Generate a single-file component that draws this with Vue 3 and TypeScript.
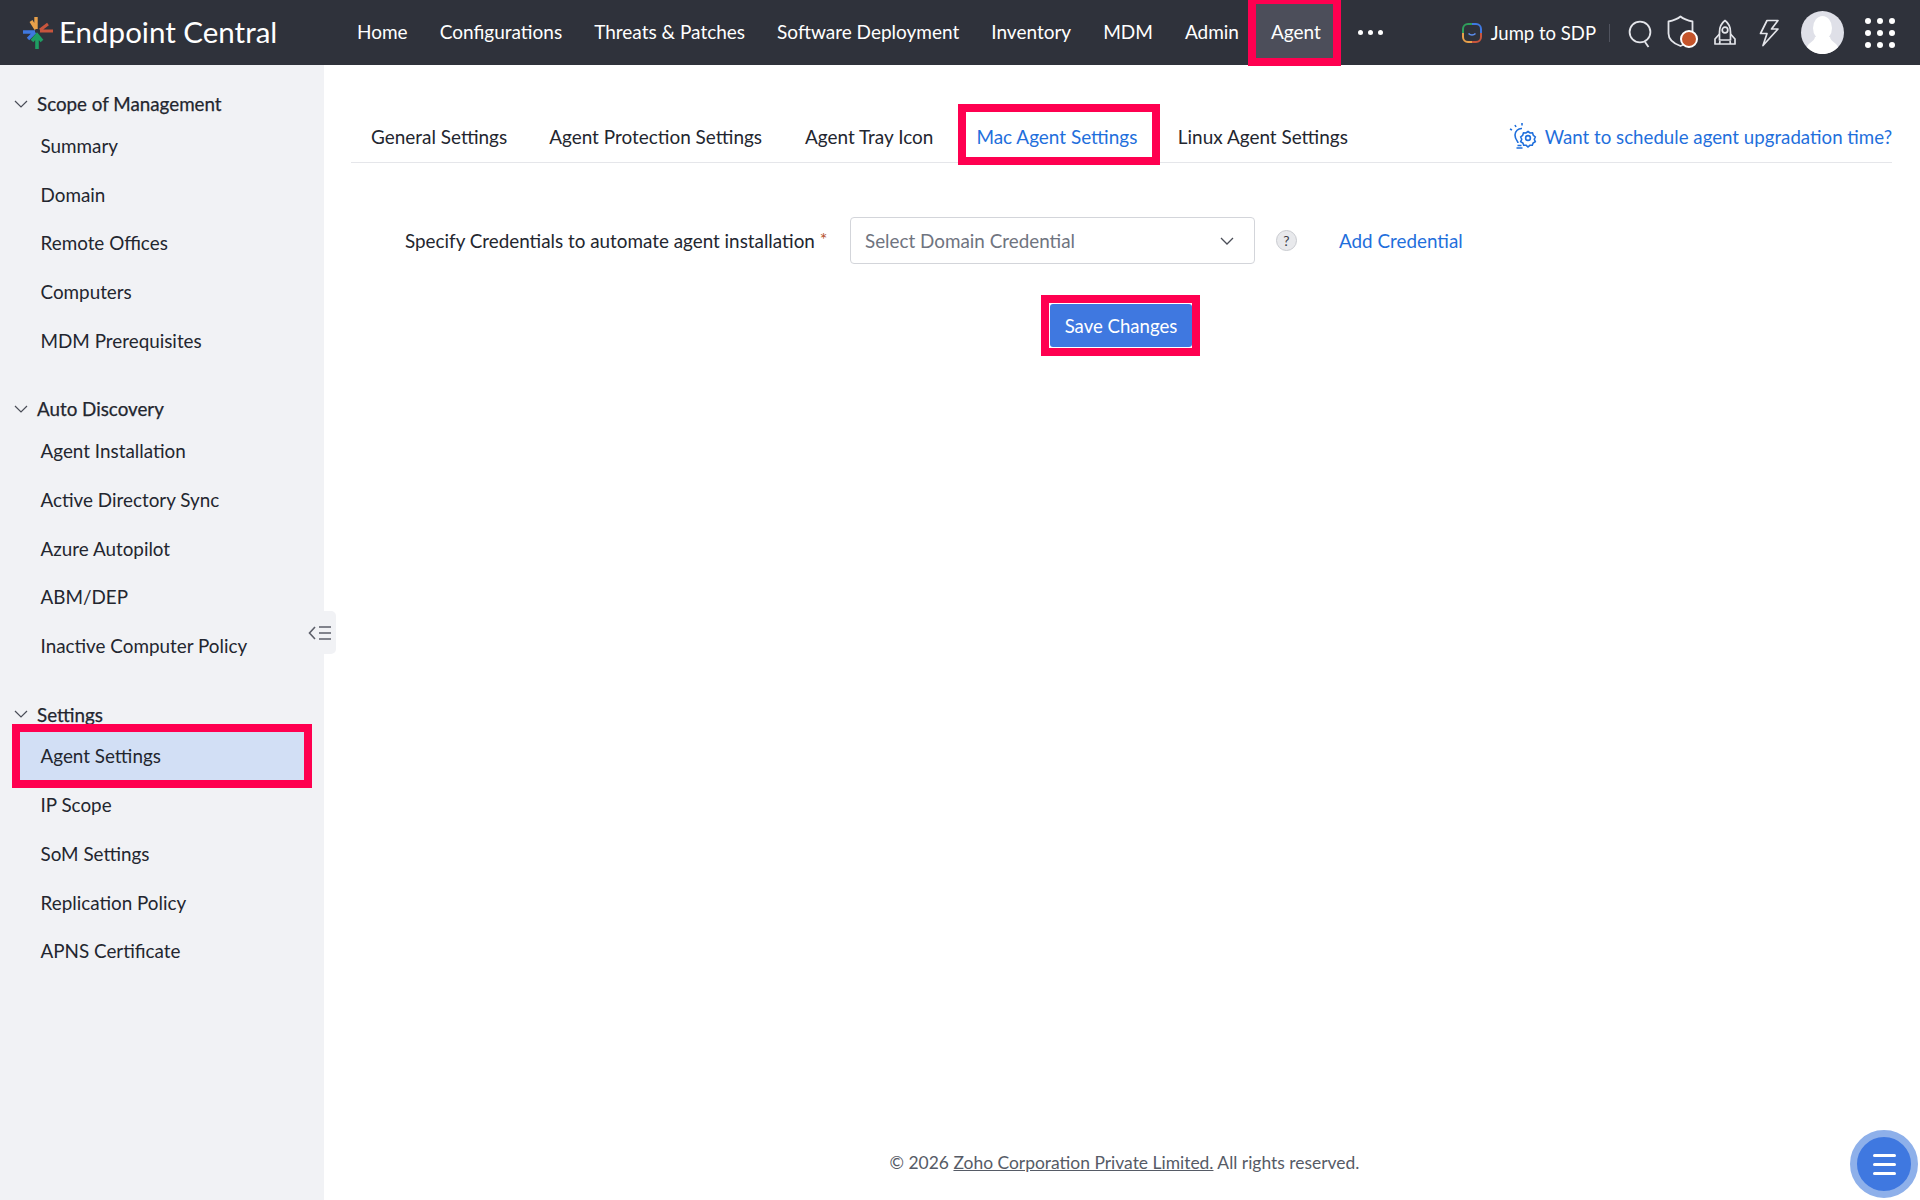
<script setup lang="ts">
interface SideGroup {
  title: string
  items: string[]
}

const navItems: string[] = [
  'Home',
  'Configurations',
  'Threats & Patches',
  'Software Deployment',
  'Inventory',
  'MDM',
  'Admin',
]

const tabs: string[] = [
  'General Settings',
  'Agent Protection Settings',
  'Agent Tray Icon',
  'Mac Agent Settings',
  'Linux Agent Settings',
]

const groups: SideGroup[] = [
  {
    title: 'Scope of Management',
    items: ['Summary', 'Domain', 'Remote Offices', 'Computers', 'MDM Prerequisites'],
  },
  {
    title: 'Auto Discovery',
    items: ['Agent Installation', 'Active Directory Sync', 'Azure Autopilot', 'ABM/DEP', 'Inactive Computer Policy'],
  },
  {
    title: 'Settings',
    items: ['Agent Settings', 'IP Scope', 'SoM Settings', 'Replication Policy', 'APNS Certificate'],
  },
]

const activeTab = 'Mac Agent Settings'
const activeItem = 'Agent Settings'
</script>

<template>
  <div class="page">
    <header class="topbar">
      <div class="brand">
        <svg class="brand__logo" width="34" height="36" viewBox="0 0 34 36" fill="none">
          <path d="M15 2v12M10 6l5 8" stroke="#e8a04a" stroke-width="3.4" />
          <path d="M32 16H19M27 9l-8 6" stroke="#c8553d" stroke-width="3" />
          <path d="M2 17h12M7 24l7-7" stroke="#3f78e0" stroke-width="3.4" />
          <path d="M16 34V21M11 26l5-6 5 6" stroke="#1f9d63" stroke-width="3.6" />
        </svg>
        <span class="brand__name">Endpoint Central</span>
      </div>

      <nav class="topnav">
        <a v-for="item in navItems" :key="item" class="topnav__item">{{ item }}</a>
        <a class="topnav__item topnav__item--active">Agent</a>
        <span class="topnav__more"><i /><i /><i /></span>
      </nav>

      <div class="tools">
        <svg class="tools__jump" width="22" height="22" viewBox="0 0 22 22" fill="none">
          <path d="M2 11V7a5 5 0 0 1 5-5h4" stroke="#2f9e5b" stroke-width="2" />
          <path d="M11 2h4a5 5 0 0 1 5 5v4" stroke="#3f78e0" stroke-width="2" />
          <path d="M20 11v4a5 5 0 0 1-5 5h-4" stroke="#c8553d" stroke-width="2" />
          <path d="M11 20H7a5 5 0 0 1-5-5v-4" stroke="#e8a04a" stroke-width="2" />
          <path d="M7.500 11.500c2 1.800 5 1.800 7 0" stroke="#5b8def" stroke-width="1.600" />
        </svg>
        <span class="tools__label">Jump to SDP</span>
        <span class="tools__sep" />
        <svg class="tools__search" width="26" height="28" viewBox="0 0 26 28" fill="none">
          <circle cx="12" cy="12" r="10.400" stroke="#e4e5ea" stroke-width="1.800" />
          <path d="M17 22l3.500 5" stroke="#e4e5ea" stroke-width="1.800" />
        </svg>
        <span class="tools__shield">
          <svg width="28" height="33" viewBox="0 0 28 33" fill="none">
            <path d="M13.500 1.500c3 2.500 7 4 12 5v12c0 6-5 10-12 12.500c-7-2.500-12-6.500-12-12.500v-12c5-1 9-2.500 12-5z" stroke="#e4e5ea" stroke-width="1.800" stroke-linejoin="round" />
          </svg>
          <i class="tools__badge" />
        </span>
        <svg class="tools__rocket" width="24" height="28" viewBox="0 0 24 28" fill="none" stroke="#e4e5ea" stroke-width="1.700">
          <path d="M12 1.500c4 3 5.500 7 5.500 11.500v8h-11v-8C6.500 8.500 8 4.500 12 1.500z" stroke-linejoin="round" />
          <circle cx="12" cy="11" r="2.800" />
          <path d="M6.500 15L2 20v5h4.500l.5-3M17.500 15l4.500 5v5h-4.500l-.5-3M6.500 25h11" stroke-linejoin="round" />
        </svg>
        <svg class="tools__bolt" width="22" height="28" viewBox="0 0 22 28" fill="none">
          <path d="M9 1.500h11l-6.500 8.500H20L5 26.500l4-12H2.500z" stroke="#e4e5ea" stroke-width="1.700" stroke-linejoin="round" />
        </svg>
        <svg class="tools__avatar" width="43" height="43" viewBox="0 0 43 43">
          <circle cx="21.500" cy="21.500" r="21.500" fill="#dfe0e8" />
          <ellipse cx="21.500" cy="17" rx="9.500" ry="12" fill="#fff" />
          <path d="M14 26c-1 5-6 5-8 10 4 4.500 9.500 7 15.500 7S33 40.500 37 36c-2-5-7-5-8-10z" fill="#fff" />
        </svg>
        <span class="tools__apps"><i v-for="n in 9" :key="n" /></span>
      </div>
    </header>

    <div class="body">
      <aside class="sidebar">
        <section v-for="group in groups" :key="group.title" class="side-group">
          <h3 class="side-group__title">
            <svg width="14" height="8" viewBox="0 0 14 8" fill="none">
              <path d="M1 1l6 6 6-6" stroke="#4a4d57" stroke-width="1.200" />
            </svg>
            {{ group.title }}
          </h3>
          <a
            v-for="item in group.items"
            :key="item"
            class="side-group__item"
            :class="{ 'side-group__item--active': item === activeItem }"
          >{{ item }}</a>
        </section>

        <button class="sidebar__collapse" type="button" aria-label="Collapse">
          <svg width="24" height="16" viewBox="0 0 24 16" fill="none" stroke="#5c5f69" stroke-width="1.600">
            <path d="M7 2L1.500 8 7 14" />
            <path d="M11 2h12M11 8h12M11 14h12" />
          </svg>
        </button>
      </aside>

      <main class="content">
        <div class="tabs">
          <a
            v-for="tab in tabs"
            :key="tab"
            class="tabs__item"
            :class="{ 'tabs__item--active': tab === activeTab }"
          >{{ tab }}</a>
          <a class="tabs__hint">
            <svg width="28" height="27" viewBox="0 0 28 27" fill="none" stroke="#1f6fdc" stroke-width="1.600">
              <path d="M9 20c0-2-3-3.500-3-8a6.500 6.500 0 0 1 7-6.500M7.500 25h6M8.500 22.500h4" />
              <path d="M6 2l1 2M13 0v2.500M1 6l2 1" />
              <circle cx="19" cy="15" r="2.400" />
              <path d="M19 8.500l2 1.500 2.500-.2.800 2.500 2 1.700-1 2.300 1 2.300-2.200 1.400-.8 2.300h-2.500L19 24l-1.800-1.700h-2.500l-.8-2.300-2.200-1.400 1-2.300-1-2.300 2-1.700.8-2.500 2.500.2z" />
            </svg>
            Want to schedule agent upgradation time?
          </a>
        </div>

        <form class="form" @submit.prevent>
          <div class="form__row">
            <label class="form__label">Specify Credentials to automate agent installation <em>*</em></label>
            <div class="select">
              <span>Select Domain Credential</span>
              <svg width="14" height="8" viewBox="0 0 14 8" fill="none">
                <path d="M1 1l6 6 6-6" stroke="#4a4d57" stroke-width="1.300" />
              </svg>
            </div>
            <span class="form__help">?</span>
            <a class="form__link">Add Credential</a>
          </div>
          <span class="form__save-mark">
            <button class="form__save" type="submit">Save Changes</button>
          </span>
        </form>

        <footer class="footer">
          © 2026 <u>Zoho Corporation Private Limited.</u> All rights reserved.
        </footer>
      </main>
    </div>

    <button class="fab" type="button" aria-label="Menu"><i /><i /><i /></button>
  </div>
</template>

<style>
html,
body {
  margin: 0;
  background: #fff;
}
</style>

<style scoped>
.page {
  display: flex;
  flex-direction: column;
  height: 1200px;
  overflow: hidden;
  position: relative;
  font-family: Lato, "Liberation Sans", sans-serif;
  font-size: 18.850px;
  color: #23262f;
}

.topbar {
  display: flex;
  flex-shrink: 0;
  align-items: center;
  height: 65px;
  background: #2f323b;
  color: #fff;
  position: relative;
  z-index: 2;
}

.brand {
  display: flex;
  align-items: center;
  width: 340px;
  padding-left: 21px;
  box-sizing: border-box;
  flex-shrink: 0;
}

.brand__logo {
  margin-right: 4px;
}

.brand__name {
  padding-bottom: 2px;
  font-size: 29.500px;
  white-space: nowrap;
}

.topnav {
  display: flex;
  align-items: center;
  height: 100%;
  font-size: 19px;
}

.topnav__item {
  padding: 0 15px 2px 17px;
  white-space: nowrap;
}

.topnav__item--active {
  display: flex;
  align-items: center;
  align-self: flex-start;
  height: 54px;
  margin: 4px 0 0 2px;
  padding: 0 12px 0 15px;
  background: #4c4e5a;
  outline: 8px solid #ff0050;
}

.topnav__more {
  display: flex;
  gap: 5px;
  margin-left: 25px;
}

.topnav__more i {
  width: 5px;
  height: 5px;
  border-radius: 50%;
  background: #fff;
}

.tools {
  display: flex;
  align-items: center;
  margin-left: auto;
  padding-right: 25px;
}

.tools__label {
  margin-left: 8px;
  font-size: 18.500px;
  white-space: nowrap;
}

.tools__sep {
  width: 1px;
  height: 18px;
  margin: 0 18px 0 13px;
  background: #50535e;
}

.tools__search {
  margin-top: 2px;
}

.tools__shield {
  position: relative;
  display: flex;
  margin: -2px 0 0 12.500px;
}

.tools__badge {
  position: absolute;
  right: -3px;
  bottom: 0;
  width: 14px;
  height: 14px;
  border: 2px solid #fff;
  border-radius: 50%;
  background: #c4542a;
}

.tools__rocket {
  margin-left: 18.500px;
}

.tools__bolt {
  margin-left: 21px;
}

.tools__avatar {
  margin-left: 21px;
}

.tools__apps {
  display: grid;
  grid-template-columns: repeat(3, 6px);
  gap: 6px;
  margin-left: 21px;
}

.tools__apps i {
  width: 6px;
  height: 6px;
  border-radius: 50%;
  background: #fff;
}

.body {
  display: flex;
  flex: 1;
  min-height: 0;
}

.sidebar {
  position: relative;
  flex-shrink: 0;
  width: 324px;
  padding-top: 21px;
  background: #f1f2f5;
  box-sizing: border-box;
}

.side-group {
  display: flex;
  flex-direction: column;
  margin-bottom: 26.500px;
}

.side-group__title {
  display: flex;
  align-items: center;
  gap: 9px;
  height: 35px;
  margin: 0;
  padding-left: 14px;
  font-size: 18.800px;
  font-weight: 400;
  -webkit-text-stroke: 0.25px #23262f;
}

.side-group__item {
  display: flex;
  align-items: center;
  height: 48.750px;
  margin: 0 20px;
  padding-left: 20.500px;
}

.side-group__item--active {
  background: #d2dff5;
  outline: 8px solid #ff0050;
  position: relative;
}

.sidebar__collapse {
  position: absolute;
  top: 546px;
  right: -12px;
  display: flex;
  align-items: center;
  justify-content: center;
  width: 28px;
  height: 43px;
  padding: 0 4px 0 0;
  border: none;
  border-radius: 0 5px 5px 0;
  background: #f1f2f5;
}

.content {
  display: flex;
  flex: 1;
  flex-direction: column;
  min-width: 0;
  padding: 47px 28px 0 27px;
}

.tabs {
  display: flex;
  align-items: center;
  height: 50px;
  border-bottom: 1px solid #e5e6ea;
}

.tabs__item {
  display: flex;
  align-items: center;
  height: 45px;
  padding: 4px 21px 0;
  margin-bottom: 5px;
  box-sizing: border-box;
  font-size: 18.950px;
  white-space: nowrap;
}

.tabs__item:first-child {
  padding-left: 20px;
}

.tabs__item:nth-child(2),
.tabs__item:nth-child(3) {
  padding-right: 22px;
}

.tabs__item--active {
  padding: 4px 14.500px 0 10px;
  margin: 0 26px 5px 11px;
  color: #1f6fdc;
  outline: 8px solid #ff0050;
}

.tabs__item--active + .tabs__item {
  padding-left: 0;
}

.tabs__hint {
  display: flex;
  align-items: center;
  gap: 8px;
  margin: 4px 0 5px auto;
  font-size: 18.700px;
  color: #1f6fdc;
  white-space: nowrap;
}

.form {
  display: flex;
  flex-direction: column;
}

.form__row {
  display: flex;
  align-items: center;
  margin-top: 54px;
  padding-left: 54px;
}

.form__label {
  width: 445px;
  flex-shrink: 0;
  white-space: nowrap;
}

.form__label em {
  color: #b5532f;
  font-style: normal;
  font-size: 18px;
  line-height: 0;
  vertical-align: 2px;
}

.select {
  display: flex;
  align-items: center;
  justify-content: space-between;
  width: 405px;
  height: 47px;
  padding: 0 20px 0 14px;
  border: 1px solid #d3d5da;
  border-radius: 4px;
  box-sizing: border-box;
  color: #6f7480;
}

.form__help {
  display: flex;
  align-items: center;
  justify-content: center;
  width: 21px;
  height: 21px;
  margin-left: 21px;
  border: 1px solid #c9cbd0;
  border-radius: 50%;
  background: #e8e9ec;
  box-sizing: border-box;
  font-size: 14px;
  color: #3a3d46;
}

.form__link {
  margin-left: 42px;
  color: #1f6fdc;
  white-space: nowrap;
}

.form__save-mark {
  display: flex;
  align-self: flex-start;
  margin: 39px 0 0 698px;
  padding: 1px 0 1px 1px;
  outline: 8px solid #ff0050;
}

.form__save {
  width: 142px;
  height: 43px;
  border: none;
  border-radius: 3px;
  background: #3f78e0;
  color: #fff;
  font-family: inherit;
  font-size: 18.600px;
}

.footer {
  margin-top: auto;
  padding: 0 0 27px 6px;
  text-align: center;
  font-size: 17.450px;
  color: #565b66;
}

.fab {
  position: absolute;
  right: 2px;
  bottom: 2px;
  display: flex;
  flex-direction: column;
  align-items: center;
  justify-content: center;
  gap: 6px;
  width: 54px;
  height: 54px;
  padding: 0;
  border: 7px solid #8eb0ea;
  border-radius: 50%;
  box-sizing: content-box;
  background: #3f78e0;
}

.fab i {
  width: 23px;
  height: 3px;
  border-radius: 2px;
  background: #fff;
}
</style>
